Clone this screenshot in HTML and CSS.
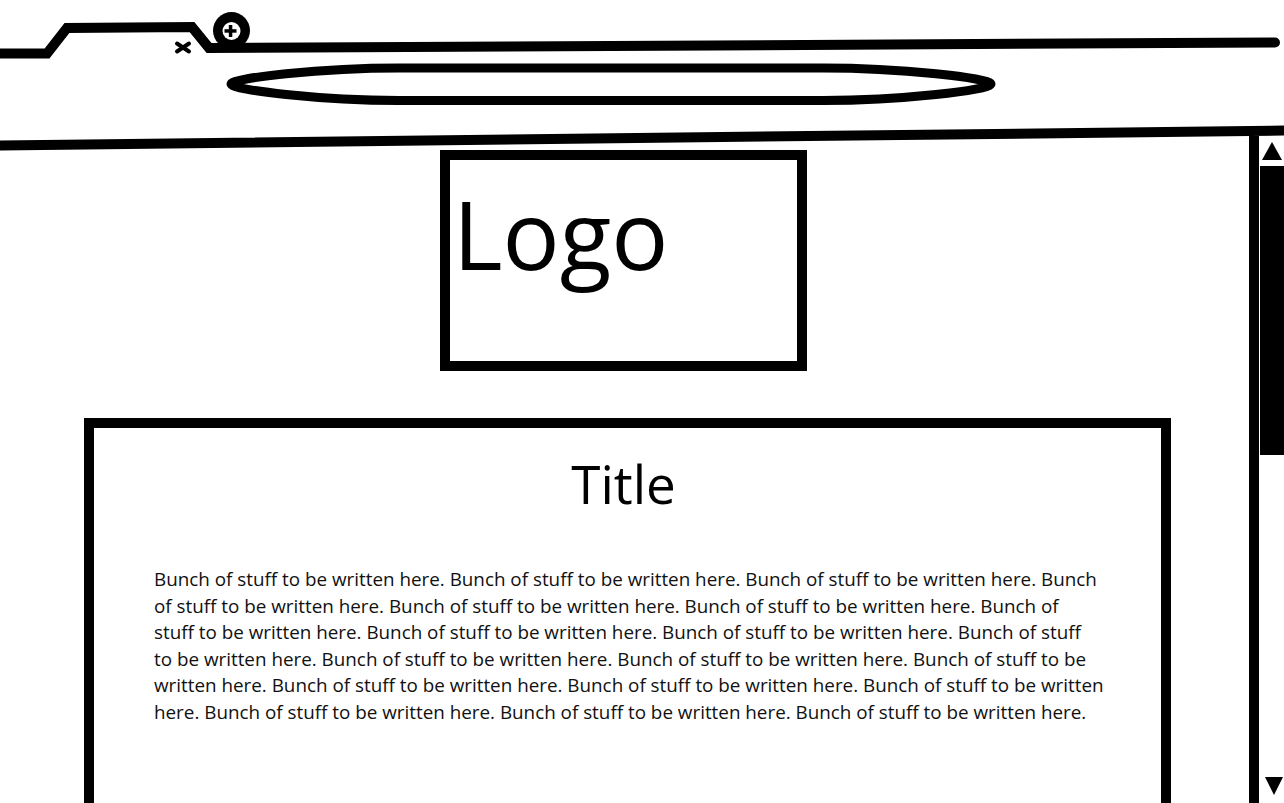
FILE: index.html
```html
<!DOCTYPE html>
<html lang="en">

<head>
  <meta charset="UTF-8">
  <meta name="viewport" content="width=device-width, initial-scale=1.0">
  <title>Wireframe</title>
  <link rel="stylesheet" href="styles.css">
</head>

<body>
  <div class="window">
    <header class="chrome">
      <svg width="1284" height="136" viewBox="0 0 1284 136">
        <path class="ink" d="M0,53.5 L47,53.5 L67,28 L192,27 L209,48 L1275,42.5" stroke-width="10" />
        <path class="ink" d="M177,43.5 L189,51.5 M189,43.5 L177,51.5" stroke-width="4" stroke-linecap="butt" />
        <circle cx="231.5" cy="30.5" r="18.5" fill="#000" />
        <circle cx="231.5" cy="31" r="9" fill="#fff" />
        <rect x="228.8" y="25" width="3.5" height="12" fill="#000" />
        <rect x="224.5" y="29.2" width="12" height="3.5" fill="#000" />
        <path class="ink" d="M399,68 L823,68 C900,68 991,78 991,84 C991,90 900,100.5 823,100.5 L399,100.5 C322,100.5 231,90 231,84 C231,78 322,68 399,68 Z" stroke-width="9" />
        <path class="ink" d="M-5,145.5 L1290,130.5" stroke-width="10" stroke-linecap="butt" />
      </svg>
    </header>

    <div class="viewport">
      <main class="page">
        <div class="logo">Logo</div>
        <section class="card">
          <h1 class="title">Title</h1>
          <!-- line breaks kept as in the mockup -->
          <p class="text">Bunch of stuff to be written here. Bunch of stuff to be written here. Bunch of stuff to be written here. Bunch<br>
            of stuff to be written here. Bunch of stuff to be written here. Bunch of stuff to be written here. Bunch of<br>
            stuff to be written here. Bunch of stuff to be written here. Bunch of stuff to be written here. Bunch of stuff<br>
            to be written here. Bunch of stuff to be written here. Bunch of stuff to be written here. Bunch of stuff to be<br>
            written here. Bunch of stuff to be written here. Bunch of stuff to be written here. Bunch of stuff to be written<br>
            here. Bunch of stuff to be written here. Bunch of stuff to be written here. Bunch of stuff to be written here.</p>
        </section>
      </main>

      <aside class="scrollbar">
        <svg class="arrow" width="20" height="18" viewBox="0 0 20 18">
          <polygon points="10,0 20,18 0,18" />
        </svg>
        <div class="thumb"></div>
        <svg class="arrow arrow-down" width="18" height="18" viewBox="0 0 18 18">
          <polygon points="0,0 18,0 9,18" />
        </svg>
      </aside>
    </div>
  </div>
</body>

</html>
```

FILE: styles.css
```css
* {
  padding: 0;
  margin: 0;
  border: 0;
  box-sizing: border-box;
  font-family: "Open Sans", "Noto Sans", sans-serif;
}

body {
  width: 1284px;
  height: 803px;
  overflow: hidden;
  background: #fff;
  color: #000;
}

.window {
  height: 100%;
}

.chrome {
  height: 136px;
}

.chrome svg {
  display: block;
  overflow: visible;
}

.chrome .ink {
  fill: none;
  stroke: #000;
  stroke-linecap: round;
}

.viewport {
  display: flex;
  height: 667px;
}

.page {
  flex: 0 0 1249px;
  overflow: hidden;
  padding-top: 14px;
}

.logo {
  width: 367px;
  height: 221px;
  margin-left: 440px;
  padding: 26px 0 0 3px;
  border: solid 10px #000;
  font-size: 95px;
  line-height: 1;
}

.card {
  width: 1087px;
  height: 600px;
  margin: 47px 0 0 84px;
  border: solid 10px #000;
  border-bottom: 0;
}

.title {
  margin-top: 29px;
  padding-right: 8px;
  font-size: 53px;
  font-weight: 400;
  line-height: 1;
  text-align: center;
}

.text {
  width: 980px;
  margin: 56px 0 0 60px;
  font-size: 18.83px;
  line-height: 26.6px;
  color: #111;
  white-space: nowrap;
}

.scrollbar {
  flex: 1;
  display: flex;
  flex-direction: column;
  align-items: center;
  padding: 6px 0 8px;
  border-left: solid 10px #000;
}

.arrow {
  display: block;
  flex: none;
}

.arrow polygon {
  fill: #000;
}

.arrow-down {
  margin-top: auto;
  margin-left: 5px;
}

.thumb {
  align-self: stretch;
  height: 289px;
  margin: 6px 0 0 1px;
  background: #000;
}
```
